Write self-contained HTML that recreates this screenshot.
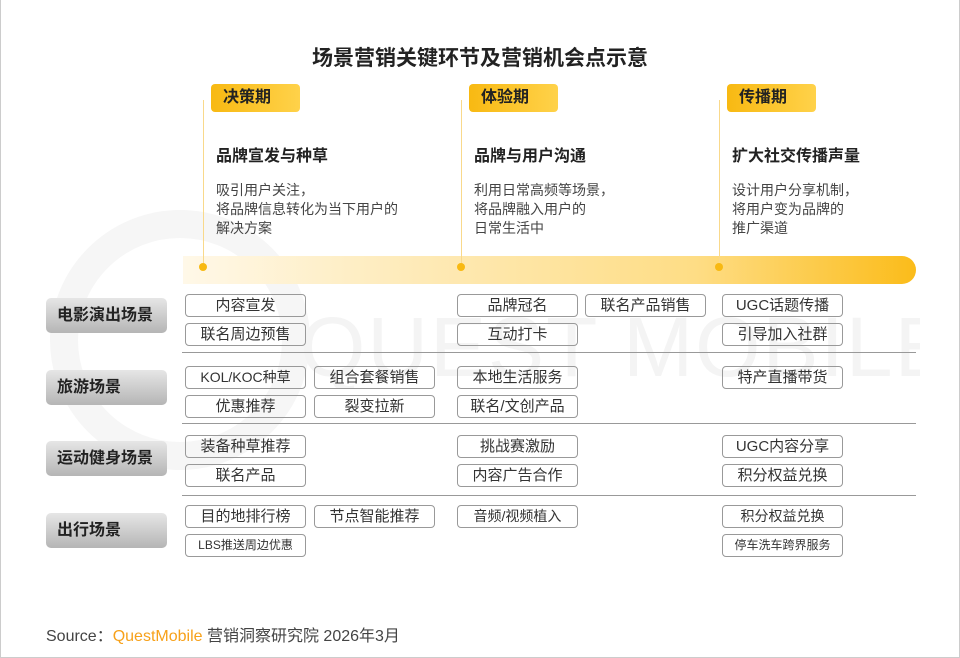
<!DOCTYPE html>
<html><head><meta charset="utf-8"><style>
*{margin:0;padding:0;box-sizing:border-box}
body{width:960px;height:658px;background:#fff;position:relative;overflow:hidden;font-family:"Liberation Sans","Noto Sans CJK SC",sans-serif;color:#333}
.frame{position:absolute;left:0;top:0;width:960px;height:658px;border:1px solid #ccc;border-top:none}
.a{position:absolute}
.title{left:0;width:960px;top:42px;text-align:center;font-size:21px;font-weight:bold;color:#222}
.tag{width:89px;height:28px;border-radius:4px;background:linear-gradient(90deg,#f8b912,#ffd24a);font-weight:bold;font-size:16px;line-height:28px;padding-left:12px;color:#222}
.vl{width:1px;background:#f9d98b;top:100px;height:167px}
.dot{width:8px;height:8px;border-radius:50%;background:#f8b912;top:263px}
.h{font-size:16px;font-weight:bold;color:#222;top:142px}
.d{font-size:14px;line-height:19px;color:#444;top:181px}
.bar{left:183px;top:256px;width:733px;height:28px;border-radius:0 14px 14px 0;background:linear-gradient(90deg,#fff8e8 0%,#fee9b3 35%,#fedd85 70%,#fbbc1a 100%)}
.b{width:121px;height:23px;border:1px solid #999;border-radius:4px;font-size:15px;line-height:21px;text-align:center;color:#333;background:transparent;white-space:nowrap}
.lab{left:46px;width:121px;height:35px;border-radius:5px;background:linear-gradient(180deg,#e6e6e6,#b5b5b5);font-size:16px;font-weight:bold;line-height:35px;padding-left:11px;color:#222}
.ln{left:182px;width:734px;height:1px;background:#999}
.wm{font-size:84px;color:#f4f4f4;letter-spacing:2px;white-space:nowrap;line-height:1;width:620px;overflow:hidden}
</style></head><body>
<div class="a" style="left:50px;top:210px;width:260px;height:260px;border-radius:50%;border:28px solid #f6f6f6"></div>
<div class="a wm" style="left:300px;top:305px">QUEST MOBILE</div>
<div class="a title">场景营销关键环节及营销机会点示意</div>
<div class="a bar"></div>
<div class="a vl" style="left:203px"></div><div class="a vl" style="left:461px"></div><div class="a vl" style="left:719px"></div>
<div class="a dot" style="left:199px"></div><div class="a dot" style="left:457px"></div><div class="a dot" style="left:715px"></div>
<div class="a tag" style="left:211px;top:84px">决策期</div>
<div class="a tag" style="left:469px;top:84px">体验期</div>
<div class="a tag" style="left:727px;top:84px">传播期</div>
<div class="a h" style="left:216px">品牌宣发与种草</div>
<div class="a h" style="left:474px">品牌与用户沟通</div>
<div class="a h" style="left:732px">扩大社交传播声量</div>
<div class="a d" style="left:216px">吸引用户关注，<br>将品牌信息转化为当下用户的<br>解决方案</div>
<div class="a d" style="left:474px">利用日常高频等场景，<br>将品牌融入用户的<br>日常生活中</div>
<div class="a d" style="left:732px">设计用户分享机制，<br>将用户变为品牌的<br>推广渠道</div>

<div class="a lab" style="top:298px">电影演出场景</div>
<div class="a lab" style="top:370px">旅游场景</div>
<div class="a lab" style="top:441px">运动健身场景</div>
<div class="a lab" style="top:513px">出行场景</div>
<div class="a ln" style="top:352px"></div>
<div class="a ln" style="top:423px"></div>
<div class="a ln" style="top:495px"></div>

<div class="a b" style="left:185px;top:294px">内容宣发</div>
<div class="a b" style="left:185px;top:323px">联名周边预售</div>
<div class="a b" style="left:457px;top:294px">品牌冠名</div>
<div class="a b" style="left:585px;top:294px">联名产品销售</div>
<div class="a b" style="left:457px;top:323px">互动打卡</div>
<div class="a b" style="left:722px;top:294px">UGC话题传播</div>
<div class="a b" style="left:722px;top:323px">引导加入社群</div>

<div class="a b" style="left:185px;top:366px;font-size:14px">KOL/KOC种草</div>
<div class="a b" style="left:314px;top:366px">组合套餐销售</div>
<div class="a b" style="left:185px;top:395px">优惠推荐</div>
<div class="a b" style="left:314px;top:395px">裂变拉新</div>
<div class="a b" style="left:457px;top:366px">本地生活服务</div>
<div class="a b" style="left:457px;top:395px">联名/文创产品</div>
<div class="a b" style="left:722px;top:366px">特产直播带货</div>

<div class="a b" style="left:185px;top:435px">装备种草推荐</div>
<div class="a b" style="left:185px;top:464px">联名产品</div>
<div class="a b" style="left:457px;top:435px">挑战赛激励</div>
<div class="a b" style="left:457px;top:464px">内容广告合作</div>
<div class="a b" style="left:722px;top:435px">UGC内容分享</div>
<div class="a b" style="left:722px;top:464px">积分权益兑换</div>

<div class="a b" style="left:185px;top:505px">目的地排行榜</div>
<div class="a b" style="left:314px;top:505px">节点智能推荐</div>
<div class="a b" style="left:185px;top:534px;font-size:12px">LBS推送周边优惠</div>
<div class="a b" style="left:457px;top:505px;font-size:14px">音频/视频植入</div>
<div class="a b" style="left:722px;top:505px;font-size:14px">积分权益兑换</div>
<div class="a b" style="left:722px;top:534px;font-size:12px">停车洗车跨界服务</div>

<div class="a" style="left:46px;top:622px;font-size:16px;color:#444">Source：<span style="color:#f7a11a">QuestMobile</span> 营销洞察研究院 2026年3月</div>
<div class="frame"></div>
</body></html>
